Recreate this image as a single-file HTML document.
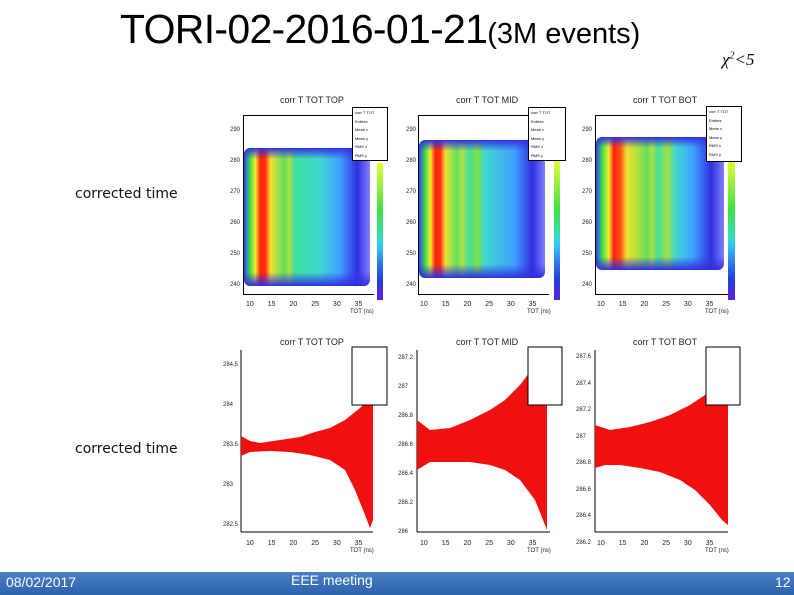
<!DOCTYPE html>
<html><head><meta charset="utf-8"><style>
*{margin:0;padding:0}
body{width:794px;height:595px;background:#fff;position:relative;overflow:hidden;font-family:"Liberation Sans",sans-serif}
.a{position:absolute}
.t{font-size:8px;color:#222;white-space:nowrap}
.frame{position:absolute;border-left:1px solid #000;border-bottom:1px solid #000}
.blob{position:absolute;border-radius:6px}
.cb{position:absolute;background:linear-gradient(to bottom,#e0ff30 0%,#a0f040 15%,#40e040 35%,#30e0c0 55%,#30c0ff 62%,#3080f0 72%,#2040e0 85%,#6020e0 100%)}
.st{position:absolute;border:1px solid #000;background:#fff;font-size:4px;line-height:8.5px;padding:1px 2px}
.corr{position:absolute;font-family:"DejaVu Sans",sans-serif;font-size:14px;color:#111}
</style></head><body>

<div class="a" style="left:120px;top:6px;font-size:41px;letter-spacing:-0.7px;white-space:nowrap">TORI-02-2016-01-21<span style="font-size:29px;letter-spacing:0">(3M events)</span></div>
<div class="a" style="left:722px;top:50px;font-family:'Liberation Serif',serif;font-size:17px;font-style:italic">χ<sup style="font-size:10px">2</sup>&lt;5</div>
<div class="corr" style="left:75px;top:186px">corrected time</div>
<div class="corr" style="left:75px;top:441px">corrected time</div>

<div class="t a" style="left:280px;top:95px;font-size:9px">corr T TOT TOP</div>
<div class="frame" style="left:243px;top:115px;width:130px;height:178px;border-top:1px solid #000"></div>
<div class="blob" style="left:244px;top:148px;width:126px;height:138px;background:linear-gradient(to bottom,#3030e0 0,rgba(60,60,230,0) 8%,rgba(60,60,230,0) 90%,#3030e0 100%),linear-gradient(to right,#3040ff 0%,#40e040 5%,#f0f030 9%,#ff2010 13%,#ff3010 17%,#f0e030 21%,#60e060 32%,#b0e040 36%,#40e0a0 40%,#40d8d0 60%,#40a0ff 76%,#3030e0 90%,#8080ff 100%)"></div>
<div class="cb" style="left:377px;top:163px;width:6px;height:137px"></div>
<div class="st" style="left:352px;top:107px;width:30px;height:50px">corr T TOT<br>Entries<br>Mean x<br>Mean y<br>RMS x<br>RMS y</div>

<div class="t a" style="left:456px;top:95px;font-size:9px">corr T TOT MID</div>
<div class="frame" style="left:418px;top:115px;width:130px;height:178px;border-top:1px solid #000"></div>
<div class="blob" style="left:419px;top:140px;width:126px;height:138px;background:linear-gradient(to bottom,#3030e0 0,rgba(60,60,230,0) 8%,rgba(60,60,230,0) 90%,#3030e0 100%),linear-gradient(to right,#3040ff 0%,#40e040 5%,#f0f030 9%,#ff2010 13%,#ff3010 17%,#f0e030 21%,#60e060 30%,#b0e040 34%,#40e0a0 40%,#80e040 46%,#40d8d0 52%,#40c0e0 62%,#40a0ff 76%,#3030e0 90%,#8080ff 100%)"></div>
<div class="cb" style="left:554px;top:160px;width:6px;height:140px"></div>
<div class="st" style="left:528px;top:107px;width:32px;height:50px">corr T TOT<br>Entries<br>Mean x<br>Mean y<br>RMS x<br>RMS y</div>

<div class="t a" style="left:633px;top:95px;font-size:9px">corr T TOT BOT</div>
<div class="frame" style="left:595px;top:115px;width:132px;height:178px;border-top:1px solid #000"></div>
<div class="blob" style="left:596px;top:137px;width:128px;height:133px;background:linear-gradient(to bottom,#3030e0 0,rgba(60,60,230,0) 8%,rgba(60,60,230,0) 90%,#3030e0 100%),linear-gradient(to right,#3040ff 0%,#40e040 5%,#f0f030 10%,#ff2010 14%,#ff5010 19%,#f0e030 24%,#a0e040 34%,#60e060 40%,#b0e040 44%,#40e0a0 48%,#a0e040 56%,#40d8d0 62%,#40a0ff 76%,#3030e0 90%,#8080ff 100%)"></div>
<div class="cb" style="left:728px;top:160px;width:7px;height:140px"></div>
<div class="st" style="left:706px;top:106px;width:30px;height:52px">corr T TOT<br>Entries<br>Mean x<br>Mean y<br>RMS x<br>RMS y</div>

<div class="t a" style="left:246px;top:301px;font-size:7px;word-spacing:12px">10 15 20 25 30 35</div>
<div class="t a" style="left:350px;top:309px;font-size:6px">TOT (ns)</div>
<div class="t a" style="left:420px;top:301px;font-size:7px;word-spacing:12px">10 15 20 25 30 35</div>
<div class="t a" style="left:527px;top:309px;font-size:6px">TOT (ns)</div>
<div class="t a" style="left:597px;top:301px;font-size:7px;word-spacing:12px">10 15 20 25 30 35</div>
<div class="t a" style="left:705px;top:309px;font-size:6px">TOT (ns)</div>
<div class="t a" style="left:230px;top:115px;font-size:6px;line-height:31px">290<br>280<br>270<br>260<br>250<br>240</div>
<div class="t a" style="left:406px;top:115px;font-size:6px;line-height:31px">290<br>280<br>270<br>260<br>250<br>240</div>
<div class="t a" style="left:582px;top:115px;font-size:6px;line-height:31px">290<br>280<br>270<br>260<br>250<br>240</div>

<div class="t a" style="left:280px;top:337px;font-size:9px">corr T TOT TOP</div>
<div class="t a" style="left:456px;top:337px;font-size:9px">corr T TOT MID</div>
<div class="t a" style="left:633px;top:337px;font-size:9px">corr T TOT BOT</div>
<svg class="a" style="left:0;top:0" width="794" height="595">
<g stroke="#000" stroke-width="1" fill="none">
<line x1="241" y1="350" x2="241" y2="532"/><line x1="241" y1="532" x2="373" y2="532"/>
<line x1="417" y1="350" x2="417" y2="532"/><line x1="417" y1="532" x2="550" y2="532"/>
<line x1="595" y1="350" x2="595" y2="532"/><line x1="595" y1="532" x2="728" y2="532"/>
</g>
<polygon fill="#f01010" points="241,436 250,441 260,443 280,440 300,437 315,432 330,428 345,420 360,408 373,395 373,520 370,528 365,515 355,490 345,470 330,460 310,455 290,452 270,451 250,452 241,456"/>
<polygon fill="#f01010" points="417,420 430,430 450,428 470,420 490,410 505,400 520,385 535,365 547,350 547,530 543,520 535,500 520,480 505,470 490,465 470,462 450,462 430,462 417,470"/>
<polygon fill="#f01010" points="595,425 610,430 630,427 650,422 670,415 690,405 705,395 720,388 728,385 728,525 722,520 710,505 695,490 680,480 660,472 640,468 620,465 605,465 595,468"/>
<g fill="#fff" stroke="#000">
<rect x="352" y="347" width="35" height="58"/><rect x="528" y="347" width="34" height="58"/><rect x="706" y="347" width="34" height="58"/>
</g>
</svg>
<div class="t a" style="left:223px;top:345px;font-size:6px;line-height:40px">284.5<br>284<br>283.5<br>283<br>282.5</div>
<div class="t a" style="left:398px;top:344px;font-size:6px;line-height:29px">287.2<br>287<br>286.8<br>286.6<br>286.4<br>286.2<br>286</div>
<div class="t a" style="left:576px;top:344px;font-size:6px;line-height:26.5px">287.6<br>287.4<br>287.2<br>287<br>286.8<br>286.6<br>286.4<br>286.2</div>
<div class="t a" style="left:246px;top:540px;font-size:7px;word-spacing:12px">10 15 20 25 30 35</div>
<div class="t a" style="left:350px;top:548px;font-size:6px">TOT (ns)</div>
<div class="t a" style="left:420px;top:540px;font-size:7px;word-spacing:12px">10 15 20 25 30 35</div>
<div class="t a" style="left:527px;top:548px;font-size:6px">TOT (ns)</div>
<div class="t a" style="left:597px;top:540px;font-size:7px;word-spacing:12px">10 15 20 25 30 35</div>
<div class="t a" style="left:705px;top:548px;font-size:6px">TOT (ns)</div>

<div class="a" style="left:0;top:572px;width:794px;height:23px;background:linear-gradient(to bottom,#4a80c8,#2f62ad)"></div>
<div class="a" style="left:6px;top:574px;color:#fff;font-size:14px">08/02/2017</div>
<div class="a" style="left:291px;top:572px;color:#fff;font-size:14px">EEE meeting</div>
<div class="a" style="left:775px;top:574px;color:#fff;font-size:14px">12</div>
</body></html>
